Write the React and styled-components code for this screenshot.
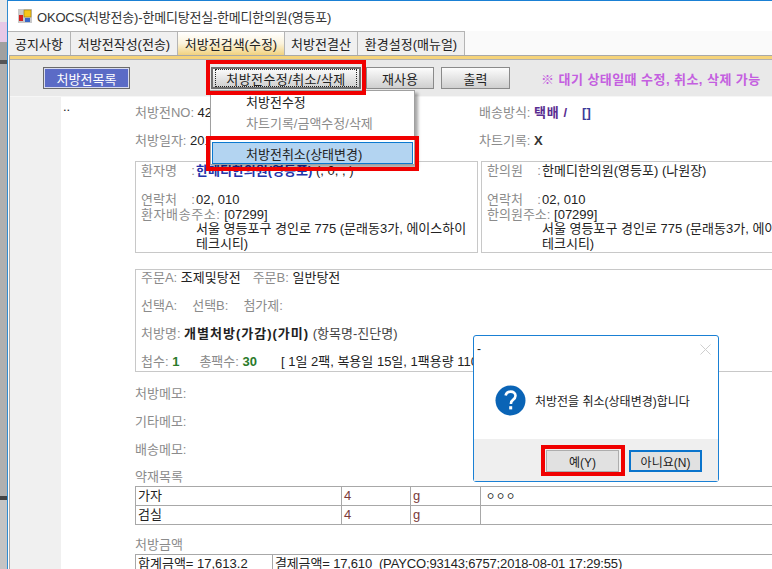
import React from "react";
import styled, { createGlobalStyle } from "styled-components";

const GlobalStyle = createGlobalStyle`
	html, body {
		margin: 0;
		padding: 0;
		background: #fff;
		overflow: hidden;
	}
	body {
		font-family: "Liberation Sans", "Noto Sans CJK KR", sans-serif;
		font-size: 13px;
		color: #222;
	}
`;

const Screen = styled.div`
	position: relative;
	display: flex;
	width: 772px;
	height: 569px;
	overflow: hidden;
`;

// bit of the desktop and the window behind, left of the program
const DesktopStrip = styled.div`
	flex: 0 0 7px;
	background: linear-gradient(
		to bottom,
		#e8e8e8 0 22px,
		#e6c8e6 22px 42px,
		#a0a0a0 42px 60px,
		#555 60px 64px,
		#b0b0b0 64px 496px,
		#444 496px 500px,
		#c4c4c4 500px
	);
`;

const Window = styled.div`
	flex: 1;
	display: flex;
	flex-direction: column;
	min-width: 0;
	border-left: 1px solid #2f8bd0;
	border-top: 1px solid #1a80d4;
`;

const TitleBar = styled.div`
	display: flex;
	align-items: center;
	gap: 5px;
	height: 30px;
	padding: 0 0 0 10px;
	background: #fff;
	color: #333;
	font-size: 13px;
	letter-spacing: -0.2px;
`;

const TabBar = styled.div`
	display: flex;
	height: 24px;
	background: #fafafa;
`;

const Tab = styled.div`
	display: flex;
	align-items: center;
	justify-content: center;
	flex: 0 0 ${(p) => p.$w}px;
	box-sizing: border-box;
	border: 1px solid #b4b4b4;
	border-bottom: none;
	border-left: ${(p) => (p.$first ? "none" : "1px solid #b4b4b4")};
	margin-left: ${(p) => (p.$first ? "0" : "-1px")};
	background: ${(p) =>
		p.$active ? "linear-gradient(to bottom, #fff 0%, #fbf3dc 50%, #f2d27e 100%)" : "#f0f0f0"};
	color: #222;
`;

const Panel = styled.div`
	flex: 1;
	display: flex;
	flex-direction: column;
	min-height: 0;
	margin-left: 1px;
	border-left: 1px solid #a8a8a8;
`;

const GoldStripe = styled.div`
	box-sizing: border-box;
	height: 5px;
	background: #f5d37a;
	border-top: 1px solid #a8a8a8;
	border-bottom: 1px solid #b0b0b0;
`;

const Toolbar = styled.div`
	display: flex;
	align-items: center;
	box-sizing: border-box;
	height: 37px;
	padding-left: 33px;
	background: #e9e9e9;
	border-bottom: 1px solid #f6f6f6;
`;

const ListButton = styled.div`
	display: flex;
	align-items: center;
	justify-content: center;
	box-sizing: border-box;
	width: 87px;
	height: 22px;
	background: #5b6bc6;
	border: 1px solid #6a6a6a;
	box-shadow: inset 0 0 0 1px #d8dcf0;
	color: #fff;
`;

const ActionButton = styled.div`
	display: flex;
	align-items: center;
	justify-content: center;
	box-sizing: border-box;
	width: ${(p) => p.$w}px;
	height: 22px;
	margin-left: ${(p) => p.$ml}px;
	background: linear-gradient(to bottom, #fcfcfc, #cfcfcf);
	border: ${(p) => (p.$focused ? "2px solid #6e6e6e" : "1px solid #8a8a8a")};
	color: #222;
`;

const FocusDots = styled.span`
	display: flex;
	align-items: center;
	justify-content: center;
	box-sizing: border-box;
	width: 100%;
	height: 100%;
	margin: 2px;
	border: 1px dotted #222;
	letter-spacing: 0.4px;
`;

const Notice = styled.div`
	margin-left: 31px;
	color: #c45fe0;
	font-weight: 700;
	letter-spacing: 0.45px;
	white-space: nowrap;
`;

const Body = styled.div`
	flex: 1;
	display: flex;
	min-height: 0;
`;

const Gutter = styled.div`
	flex: 0 0 51px;
	background: #f0f0f0;
`;

const DotColumn = styled.div`
	flex: 0 0 74px;
	box-sizing: border-box;
	padding: 3px 0 0 2px;
	font-size: 13px;
	line-height: 14px;
	background: #fff;
`;

const Main = styled.div`
	flex: 1;
	min-width: 0;
	background: #fff;
`;

const MetaRow = styled.div`
	display: flex;
	height: 28px;
	align-items: center;
	white-space: nowrap;
`;

const MetaCell = styled.div`
	flex: 0 0 344px;
`;

const Label = styled.span`
	color: #8b8b8b;
	letter-spacing: ${(p) => p.$track || 0}px;
`;

const Value = styled.span`
	color: ${(p) => p.$color || "#222"};
	font-weight: ${(p) => (p.$bold ? 700 : 400)};
	letter-spacing: ${(p) => p.$track || 0}px;
`;

const BoxRow = styled.div`
	display: flex;
	gap: 3px;
	margin-top: 8px;
	width: 700px;
`;

const InfoBox = styled.div`
	flex: 0 0 343px;
	box-sizing: border-box;
	height: 92px;
	padding: 2px 0 0 5px;
	border: 1px solid #c8c8c8;
	line-height: 14.5px;
	white-space: nowrap;
`;

const InfoLine = styled.div`
	display: flex;
	min-height: 14.5px;
`;

const InfoLabel = styled(Label)`
	flex: 0 0 55px;
`;

const Address = styled.div`
	padding-left: 55px;
`;

const OrderBox = styled.div`
	display: flex;
	flex-direction: column;
	gap: 14px;
	box-sizing: border-box;
	width: 700px;
	margin-top: 16px;
	padding: 1px 0 2px 5px;
	border: 1px solid #c8c8c8;
	line-height: 14px;
	white-space: nowrap;
`;

const OrderLine = styled.div`
	display: flex;
	gap: ${(p) => p.$gap || 0}px;
`;

const DoseText = styled(Value)`
	margin-left: 4px;
`;

const MemoList = styled.div`
	margin-top: 6px;
`;

const SectionTitle = styled.div`
	box-sizing: border-box;
	height: ${(p) => p.$h}px;
	padding-top: ${(p) => p.$top}px;
	line-height: 14px;
	color: #8b8b8b;
`;

const HerbTable = styled.table`
	border-collapse: collapse;
	table-layout: fixed;
	width: 700px;
	margin-left: 0;
`;

const HerbCell = styled.td`
	height: 18px;
	padding: 0 2px;
	border: 1px solid #a8a8a8;
	line-height: 14px;
	color: ${(p) => p.$color || "#222"};
	white-space: nowrap;
`;

const NoteMark = styled.span`
	margin-left: 3px;
	font-size: 10px;
	word-spacing: -2px;
`;

const PayInfo = styled.span`
	letter-spacing: -0.15px;
`;

const MenuPopup = styled.div`
	position: absolute;
	left: 210px;
	top: 90px;
	box-sizing: border-box;
	width: 205px;
	height: 75px;
	background: #fff;
	border: 1px solid #a0a0a0;
	box-shadow: 3px 3px 3px rgba(0, 0, 0, 0.35);
`;

const MenuItem = styled.div`
	display: flex;
	align-items: center;
	box-sizing: border-box;
	height: ${(p) => p.$h}px;
	margin: 0 1px;
	padding-left: ${(p) => (p.$active ? 33 : 34)}px;
	color: ${(p) => (p.$muted ? "#8b8b8b" : "#222")};
	background: ${(p) => (p.$active ? "#b3d4f1" : "transparent")};
	border: ${(p) => (p.$active ? "1px solid #0a78d0" : "none")};
`;

const RedOutline = styled.div`
	position: absolute;
	left: ${(p) => p.$x}px;
	top: ${(p) => p.$y}px;
	width: ${(p) => p.$w}px;
	height: ${(p) => p.$h}px;
	box-sizing: border-box;
	border: 4px solid #f00000;
	pointer-events: none;
`;

const Dialog = styled.div`
	position: absolute;
	left: 473px;
	top: 335px;
	box-sizing: border-box;
	width: 246px;
	height: 147px;
	display: flex;
	flex-direction: column;
	background: #fff;
	border: 1px solid #1a80d4;
	border-radius: 3px;
	font-size: 12px;
`;

const DialogTitle = styled.div`
	display: flex;
	justify-content: space-between;
	align-items: center;
	height: 26px;
	padding: 0 7px 0 3px;
	color: #222;
`;

const DialogContent = styled.div`
	flex: 1;
	display: flex;
	align-items: center;
	gap: 9px;
	padding: 0 0 0 21px;
	color: #222;
`;

const DialogFooter = styled.div`
	display: flex;
	justify-content: flex-end;
	gap: 10px;
	height: 42px;
	box-sizing: border-box;
	padding: 11px 16px 0 0;
	background: #efefef;
`;

const DialogButton = styled.div`
	display: flex;
	align-items: center;
	justify-content: center;
	box-sizing: border-box;
	width: 73px;
	height: 22px;
	background: #e1e1e1;
	border: ${(p) => (p.$primary ? "2px solid #0a74cc" : "1px solid #adadad")};
	color: #222;
`;

const AppIcon = () => (
	<svg width="14" height="14" viewBox="0 0 14 14">
		<rect width="14" height="14" fill="#c9c9c9" />
		<rect x="6" y="1" width="7" height="7" fill="#f5c518" stroke="#9a7a10" strokeWidth="0.6" />
		<rect x="1" y="6" width="4" height="6" fill="#d42020" />
		<rect x="7" y="9" width="5" height="4" fill="#3a68c8" />
	</svg>
);

const QuestionIcon = () => (
	<svg width="31" height="31" viewBox="0 0 31 31">
		<circle cx="15.5" cy="15.5" r="15" fill="#0a64b6" />
		<path
			d="M10.6 10.6c.5-2.6 2.4-4 5-4 2.9 0 4.9 1.7 4.9 4.2 0 1.9-1 3-2.5 4.1-1.5 1.1-2 1.8-2 3.4v.7"
			fill="none"
			stroke="#fff"
			strokeWidth="2.6"
		/>
		<rect x="14.2" y="21.2" width="3" height="3.2" fill="#fff" />
	</svg>
);

const CloseIcon = () => (
	<svg width="11" height="11" viewBox="0 0 11 11">
		<path d="M0.5 0.5L10.5 10.5M10.5 0.5L0.5 10.5" stroke="#cfcfcf" strokeWidth="1" />
	</svg>
);

const tabs = [
	{ name: "공지사항", w: 63 },
	{ name: "처방전작성(전송)", w: 108 },
	{ name: "처방전검색(수정)", w: 108, active: true },
	{ name: "처방전결산", w: 74 },
	{ name: "환경설정(매뉴얼)", w: 108 },
];

const herbs = [
	{ name: "가자", qty: "4", unit: "g", note: "ㅇ ㅇ ㅇ" },
	{ name: "검실", qty: "4", unit: "g", note: "" },
];

export default function App() {
	return (
		<>
			<GlobalStyle />
			<Screen>
				<DesktopStrip />
				<Window>
					<TitleBar>
						<AppIcon />
						<span>OKOCS(처방전송)-한메디탕전실-한메디한의원(영등포)</span>
					</TitleBar>
					<TabBar>
						{tabs.map((tab, i) => (
							<Tab key={tab.name} $w={tab.w} $first={i === 0} $active={tab.active}>
								{tab.name}
							</Tab>
						))}
					</TabBar>
					<Panel>
						<GoldStripe />
						<Toolbar>
							<ListButton>처방전목록</ListButton>
							<ActionButton $w={150} $ml={81} $focused>
								<FocusDots>처방전수정/취소/삭제</FocusDots>
							</ActionButton>
							<ActionButton $w={68} $ml={5}>재사용</ActionButton>
							<ActionButton $w={69} $ml={7}>출력</ActionButton>
							<Notice>※ 대기 상태일때 수정, 취소, 삭제 가능</Notice>
						</Toolbar>
						<Body>
							<Gutter />
							<DotColumn>..</DotColumn>
							<Main>
								<MetaRow>
									<MetaCell>
										<Label>처방전NO: </Label>
										<Value>42</Value>
									</MetaCell>
									<div>
										<Label>배송방식: </Label>
										<Value $bold $track={0.6} $color="#5a2d91">택배 /</Value>
										<Value $bold $color="#3a3a9a">&nbsp;&nbsp;&nbsp;&nbsp;[]</Value>
									</div>
								</MetaRow>
								<MetaRow>
									<MetaCell>
										<Label>처방일자: </Label>
										<Value>2018</Value>
									</MetaCell>
									<div>
										<Label>차트기록: </Label>
										<Value $bold $color="#333">X</Value>
									</div>
								</MetaRow>
								<BoxRow>
									<InfoBox>
										<InfoLine>
											<InfoLabel>환자명&nbsp;&nbsp;&nbsp;&nbsp;:</InfoLabel>
											<span>
												<Value $bold $color="#2233aa">한메디한의원(영등포)</Value>
												<Value> (, 0, , )</Value>
											</span>
										</InfoLine>
										<InfoLine />
										<InfoLine>
											<InfoLabel>연락처&nbsp;&nbsp;&nbsp;&nbsp;:</InfoLabel>
											<Value>02, 010</Value>
										</InfoLine>
										<InfoLine>
											<Label $track={0.6}>환자배송주소: </Label>
											<Value>&nbsp;[07299]</Value>
										</InfoLine>
										<Address>
											서울 영등포구 경인로 775 (문래동3가, 에이스하이
											<br />
											테크시티)
										</Address>
									</InfoBox>
									<InfoBox>
										<InfoLine>
											<InfoLabel>한의원&nbsp;&nbsp;&nbsp;&nbsp;:</InfoLabel>
											<Value>한메디한의원(영등포) (나원장)</Value>
										</InfoLine>
										<InfoLine />
										<InfoLine>
											<InfoLabel>연락처&nbsp;&nbsp;&nbsp;&nbsp;:</InfoLabel>
											<Value>02, 010</Value>
										</InfoLine>
										<InfoLine>
											<Label>한의원주소: </Label>
											<Value>&nbsp;[07299]</Value>
										</InfoLine>
										<Address>
											서울 영등포구 경인로 775 (문래동3가, 에이스하이
											<br />
											테크시티)
										</Address>
									</InfoBox>
								</BoxRow>
								<OrderBox>
									<OrderLine $gap={12}>
										<span><Label>주문A: </Label><Value>조제및탕전</Value></span>
										<span><Label>주문B: </Label><Value>일반탕전</Value></span>
									</OrderLine>
									<OrderLine $gap={15}>
										<Label>선택A:</Label>
										<Label>선택B:</Label>
										<Label>첨가제:</Label>
									</OrderLine>
									<OrderLine>
										<span>
											<Label>처방명: </Label>
											<Value $bold $track={1}>개별처방(가감)(가미)</Value>
											<Value $color="#444"> (항목명-진단명)</Value>
										</span>
									</OrderLine>
									<OrderLine $gap={20}>
										<span><Label>첩수: </Label><Value $bold $color="#2a7a2a">1</Value></span>
										<span><Label>총팩수: </Label><Value $bold $color="#2a7a2a">30</Value></span>
										<DoseText>[ 1일 2팩, 복용일 15일, 1팩용량 110cc ]</DoseText>
									</OrderLine>
								</OrderBox>
								<MemoList>
									<MetaRow><Label>처방메모:</Label></MetaRow>
									<MetaRow><Label>기타메모:</Label></MetaRow>
									<MetaRow><Label>배송메모:</Label></MetaRow>
								</MemoList>
								<SectionTitle $h={24} $top={8}>약재목록</SectionTitle>
								<HerbTable>
									<colgroup>
										<col width="206" />
										<col width="69" />
										<col width="70" />
										<col />
									</colgroup>
									<tbody>
										{herbs.map((herb) => (
											<tr key={herb.name}>
												<HerbCell>{herb.name}</HerbCell>
												<HerbCell $color="#7a3a3a">{herb.qty}</HerbCell>
												<HerbCell $color="#7a3a3a">{herb.unit}</HerbCell>
												<HerbCell><NoteMark>{herb.note}</NoteMark></HerbCell>
											</tr>
										))}
									</tbody>
								</HerbTable>
								<SectionTitle $h={29} $top={13}>처방금액</SectionTitle>
								<HerbTable>
									<colgroup>
										<col width="137" />
										<col />
									</colgroup>
									<tbody>
										<tr>
											<HerbCell>합계금액= 17,613.2</HerbCell>
											<HerbCell><PayInfo>결제금액= 17,610&nbsp; (PAYCO;93143;6757;2018-08-01 17:29:55)</PayInfo></HerbCell>
										</tr>
									</tbody>
								</HerbTable>
							</Main>
						</Body>
					</Panel>
				</Window>

				<MenuPopup>
					<MenuItem $h={21}>처방전수정</MenuItem>
					<MenuItem $h={21} $muted>차트기록/금액수정/삭제</MenuItem>
					<MenuItem $h={9} />
					<MenuItem $h={22} $active>처방전취소(상태변경)</MenuItem>
				</MenuPopup>

				<RedOutline $x={206} $y={60} $w={160} $h={35} />
				<RedOutline $x={206} $y={136} $w={213} $h={35} />

				<Dialog>
					<DialogTitle>
						<span>-</span>
						<CloseIcon />
					</DialogTitle>
					<DialogContent>
						<QuestionIcon />
						<span>처방전을 취소(상태변경)합니다</span>
					</DialogContent>
					<DialogFooter>
						<DialogButton>예(Y)</DialogButton>
						<DialogButton $primary>아니요(N)</DialogButton>
					</DialogFooter>
				</Dialog>
				<RedOutline $x={541} $y={445} $w={84} $h={31} />
			</Screen>
		</>
	);
}
